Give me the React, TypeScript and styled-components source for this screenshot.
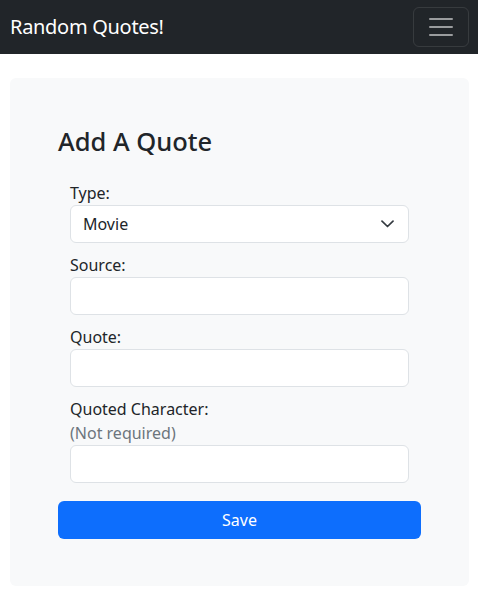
import React from "react";
import styled, { createGlobalStyle } from "styled-components";

const Global = createGlobalStyle`
  * { box-sizing: border-box; }
  body {
    margin: 0;
    font-family: "Noto Sans", "Open Sans", sans-serif;
    font-size: 16px;
    line-height: 1.5;
    color: #212529;
    background: #fff;
  }
`;

const Navbar = styled.nav`
  height: 54px;
  background: #212529;
  display: flex;
  align-items: center;
  justify-content: space-between;
  padding: 0 9px 0 10px;
`;

const Brand = styled.span`
  color: #fff;
  font-size: 20px;
  line-height: 30px;
  letter-spacing: -0.3px;
`;

const Toggler = styled.button`
  width: 56px;
  height: 40px;
  padding: 4px 12px;
  border: 1px solid rgba(255, 255, 255, 0.1);
  border-radius: 6px;
  background: transparent;
  display: flex;
  align-items: center;
  justify-content: center;
`;

const Main = styled.main`
  padding: 24px 9px 10px 10px;
`;

const Card = styled.section`
  background: #f8f9fa;
  border-radius: 6px;
  padding: 48px 48px 47px;
`;

const Title = styled.h2`
  margin: 0 0 24px;
  font-size: 25.5px;
  font-weight: 500;
  line-height: 1.2;
`;

const Form = styled.form`
  display: flex;
  flex-direction: column;
`;

const Fields = styled.div`
  display: flex;
  flex-direction: column;
  gap: 10px;
  padding: 0 12px;
`;

const Group = styled.div`
  display: flex;
  flex-direction: column;
`;

const Label = styled.label`
  font-size: 16px;
  line-height: 24px;
`;

const Hint = styled.span`
  color: #6c757d;
  line-height: 24px;
`;

const Input = styled.input`
  height: 38px;
  width: 100%;
  border: 1px solid #dee2e6;
  border-radius: 6px;
  background: #fff;
  padding: 6px 12px;
  font: inherit;
  color: #212529;
`;

const SelectBox = styled.div`
  height: 38px;
  border: 1px solid #dee2e6;
  border-radius: 6px;
  background: #fff;
  padding: 6px 14px 6px 12px;
  display: flex;
  align-items: center;
  justify-content: space-between;
`;

const Save = styled.button`
  margin-top: 18px;
  height: 38px;
  border: none;
  border-radius: 6px;
  background: #0d6efd;
  color: #fff;
  font: inherit;
`;

export default function App() {
  return (
    <>
      <Global />
      <Navbar>
        <Brand>Random Quotes!</Brand>
        <Toggler aria-label="Toggle navigation">
          <svg width="30" height="30" viewBox="0 0 30 30">
            <path
              d="M4 7h22M4 15h22M4 23h22"
              stroke="rgba(255,255,255,0.55)"
              strokeWidth="2"
              strokeLinecap="round"
              strokeMiterlimit="10"
            />
          </svg>
        </Toggler>
      </Navbar>
      <Main>
        <Card>
          <Title>Add A Quote</Title>
          <Form onSubmit={(e) => e.preventDefault()}>
            <Fields>
              <Group>
                <Label>Type:</Label>
                <SelectBox>
                  <span>Movie</span>
                  <svg width="13" height="8" viewBox="0 0 13 8">
                    <path
                      d="M1 1.2l5.5 5.3 5.5-5.3"
                      fill="none"
                      stroke="#343a40"
                      strokeWidth="1.7"
                      strokeLinecap="round"
                      strokeLinejoin="round"
                    />
                  </svg>
                </SelectBox>
              </Group>
              <Group>
                <Label>Source:</Label>
                <Input />
              </Group>
              <Group>
                <Label>Quote:</Label>
                <Input />
              </Group>
              <Group>
                <Label>Quoted Character:</Label>
                <Hint>(Not required)</Hint>
                <Input />
              </Group>
            </Fields>
            <Save type="submit">Save</Save>
          </Form>
        </Card>
      </Main>
    </>
  );
}
